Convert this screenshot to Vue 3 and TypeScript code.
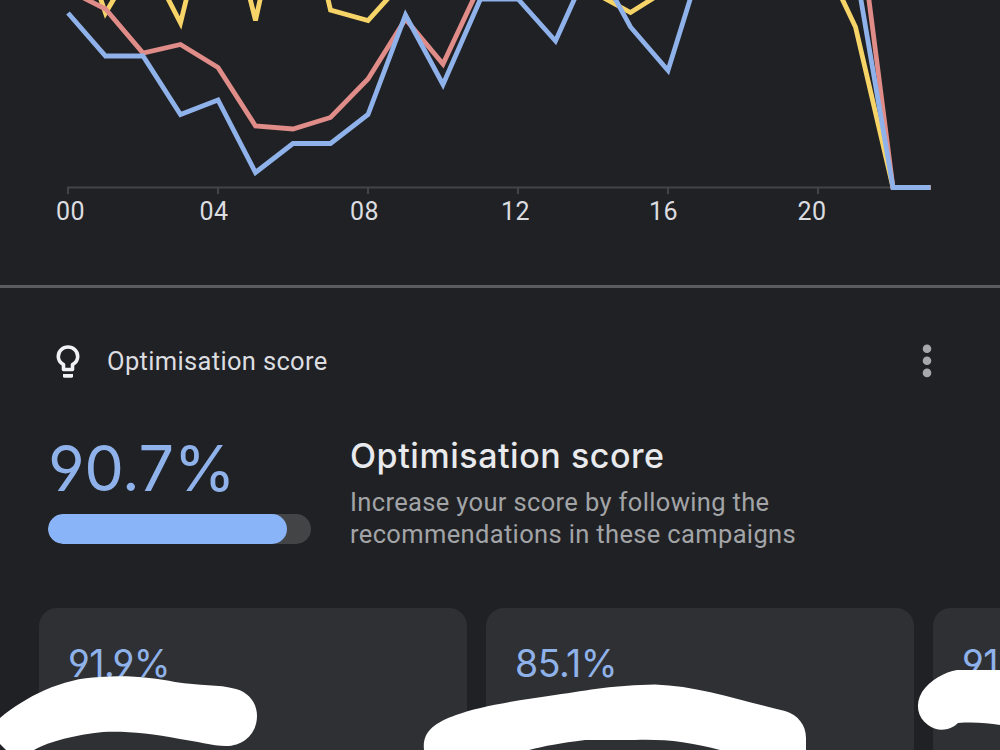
<template>
  <div class="view">

    <!-- Chart -->
    <svg class="chart" viewBox="0 0 1000 285" width="1000" height="285">
      <path class="axis" d="M68 194V187.5H930" />
      <path v-for="label in labels.slice(1)" :key="label.text" class="axis" :d="`M${label.tick} 187V194`" />
      <polyline v-for="line in series" :key="line.name" :class="['line', line.name]" :points="toPoints(line.values)" />
      <text v-for="label in labels" :key="label.text" class="tick-label" :x="label.x" y="219.5">{{ label.text }}</text>
    </svg>

    <!-- Score card -->
    <section class="card">
      <div class="card-header">
        <svg class="bulb" viewBox="0 0 24 33" width="24" height="33">
          <path class="bulb-glass" d="M7.500 24.500V19.600C4.400 17.800 2.300 15 2.300 11.400C2.300 6.300 6.600 2 12 2S21.700 6.300 21.700 11.400C21.700 15 19.600 17.800 16.500 19.600V24.500Z" />
          <path class="bulb-base" d="M7 29H17V31.200Q17 32.800 15.400 32.800H8.600Q7 32.800 7 31.200Z" />
        </svg>
        <span class="card-title">Optimisation score</span>
        <button class="menu-btn" aria-label="Menu">
          <svg viewBox="0 0 10 34" width="10" height="34">
            <circle cx="5" cy="4.700" r="4.300" />
            <circle cx="5" cy="16.800" r="4.300" />
            <circle cx="5" cy="28.900" r="4.300" />
          </svg>
        </button>
      </div>

      <div class="summary">
        <div class="score">
          <strong>{{ score }}%</strong>
          <div class="bar"><div class="bar-fill" :style="{ width: score + '%' }"></div></div>
        </div>
        <div class="summary-text">
          <h2>Optimisation score</h2>
          <p>Increase your score by following the<br>recommendations in these campaigns</p>
        </div>
      </div>

      <div class="campaigns">
        <div v-for="campaign in campaigns" :key="campaign.id" class="campaign">
          <span>{{ campaign.score }}</span>
        </div>
      </div>
    </section>

    <!-- Hidden campaign names -->
    <svg class="marker" viewBox="0 0 1000 110" width="1000" height="110">
      <path d="M0 78C25 57 62 38 100 37C130 35 155 38 175 42C200 46 218 44 236 49C250 53 257 64 257 76C257 93 244 106 226 106C212 106 196 101 180 99C150 93 125 91 103 92C75 95 50 101 34 110H6L0 104Z" />
      <path d="M424 110C422 92 434 83 456 75C480 66 520 60 555 55C590 50 615 45 655 44.500C700 46 745 62 785 71C798 75 806 85 806 98V110H720C690 102 665 99 635 100H585C560 103 545 106 529 110Z" />
      <path d="M1000 30H957C945 32 930 40 922 52C915 64 917 77 928 85C937 92 950 91 958 83C974 82 988 83 1000 85Z" />
    </svg>

  </div>
</template>

<script setup lang="ts">
interface Series {
  name: string
  values: number[]
}

interface Campaign {
  id: number
  score: string
}

const score = 90.7

const labels = [
  { text: '00', tick: 68, x: 70.5 },
  { text: '04', tick: 218, x: 214 },
  { text: '08', tick: 368, x: 364.5 },
  { text: '12', tick: 518, x: 515.5 },
  { text: '16', tick: 668, x: 663.5 },
  { text: '20', tick: 818, x: 812 },
]

// One value per hour, as a height below the top of the chart
const series: Series[] = [
  { name: 'yellow', values: [-95, 13, -50, 23, -130, 20.5, -150, 10, 20.5, -21, -60, -60, -60, -40, -8, 12.5, -11, -60, -80, -80, -52, 27, 187.5, 187.5] },
  { name: 'red', values: [-10, 9, 53, 44.5, 67.5, 126, 129, 117.5, 79, 19, 64, -16, -60, -60, -60, -60, -60, -90, -110, -110, -110, -105, 187.5, 187.5] },
  { name: 'blue', values: [13, 56, 56, 114.5, 100, 172.5, 143.5, 143.5, 114.5, 15, 84.5, -1, -1, 41, -42, 27, 70.5, -50, -80, -80, -60, -32, 187.5, 187.5] },
]

const campaigns: Campaign[] = [
  { id: 1, score: '91.9%' },
  { id: 2, score: '85.1%' },
  { id: 3, score: '91.9%' },
]

function toPoints(values: number[]): string {
  return values.map((y, i) => `${68 + i * 37.5},${y}`).join(' ')
}
</script>

<style>
body { background: #202124; }
</style>

<style scoped>
* { box-sizing: border-box; margin: 0; padding: 0; }

.view {
  position: relative;
  width: 1000px;
  height: 750px;
  overflow: hidden;
  background: #202124;
  font-family: Roboto, sans-serif;
}

.chart { display: block; }
.axis { fill: none; stroke: #434447; stroke-width: 2; }
.line { fill: none; stroke-width: 4.8; stroke-linejoin: miter; }
.yellow { stroke: #f7d468; }
.red { stroke: #e08c88; }
.blue { stroke: #8fb2ea; }
.tick-label { fill: #dcdde0; font-size: 25px; letter-spacing: 0.5px; text-anchor: middle; }

.card { border-top: 3px solid #5a5c5f; padding-top: 54px; }
.card-header { display: flex; align-items: center; height: 37px; padding: 0 68px 0 56px; }
.bulb { margin-top: 1px; }
.bulb-glass { fill: none; stroke: #f1f2f3; stroke-width: 3.6; stroke-linejoin: round; }
.bulb-base { fill: #f1f2f3; }
.card-title { flex: 1; margin-left: 27px; color: #dcdde0; font-size: 25.5px; letter-spacing: 0.34px; }
.menu-btn { display: flex; background: none; border: none; cursor: pointer; }
.menu-btn circle { fill: #a6a8ab; }

.summary { display: flex; padding: 58px 48px 0; height: 229px; }
.score { width: 302px; }
.score strong {
  display: block;
  height: 77px;
  color: #8fb2ea;
  font-family: Inter, sans-serif;
  font-size: 63px;
  font-weight: 400;
  font-feature-settings: 'cv04';
  letter-spacing: -0.5px;
  line-height: 63px;
}
.bar { width: 263px; height: 30px; border-radius: 15px; background: #434446; overflow: hidden; }
.bar-fill { height: 100%; border-radius: 15px; background: #8ab4f8; }
.summary-text h2 {
  height: 49px;
  color: #e8eaed;
  font-family: Inter, sans-serif;
  font-size: 34px;
  font-weight: 500;
  letter-spacing: 0.55px;
  line-height: 38px;
}
.summary-text p { color: #a2a4a7; font-size: 25.5px; letter-spacing: 0.35px; line-height: 32px; }

.campaigns { display: flex; gap: 19px; padding-left: 39px; }
.campaign {
  flex: none;
  width: 428px;
  height: 180px;
  padding: 33px 29px;
  border-radius: 18px;
  background: #2f3033;
}
.campaign span {
  color: #8fb2ea;
  font-family: Inter, sans-serif;
  font-size: 37.5px;
  font-weight: 400;
  font-feature-settings: 'cv04';
  letter-spacing: -0.5px;
  line-height: 46px;
}

.marker { position: absolute; left: 0; bottom: 0; fill: #fff; pointer-events: none; }
</style>
